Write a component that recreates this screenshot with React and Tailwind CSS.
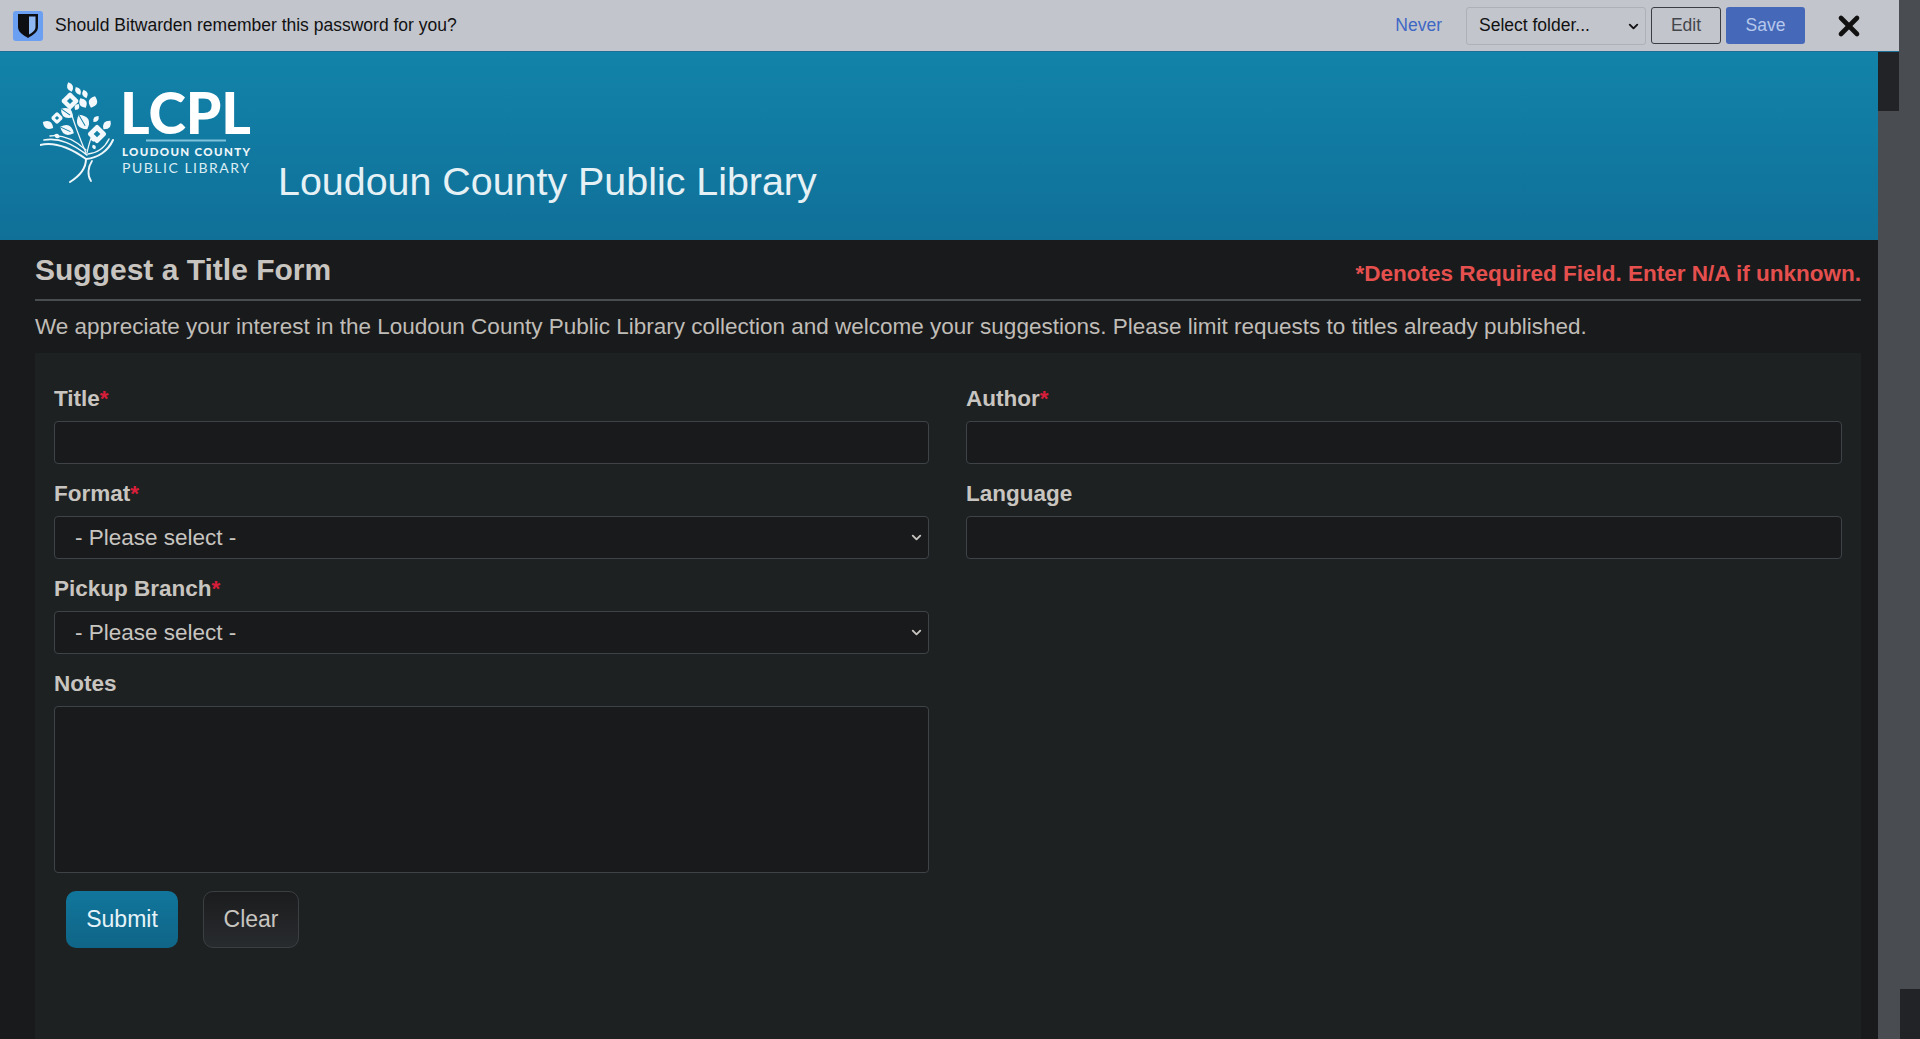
import React from 'react';
import { ChevronDown, X } from 'lucide-react';

const leaves = [
  [30, 4, 10, 5, 70], [38, 8, 9, 4.5, 60], [45, 11, 9, 4.5, 70], [53, 19, 12, 7, 110], [43, 20, 11, 6, 60],
  [27, 30, 15, 8, 35], [43, 39, 17, 10, 60], [27, 47, 15, 8, 25], [8, 42, 12, 6.5, 30], [67, 42, 11, 6, 130],
  [56, 36, 8, 4, 130], [17, 53, 6, 3.5, 30], [37, 24, 7, 4, 120], [53, 56, 6, 3.5, 70], [54, 64, 5, 3, 60],
];

const flowers = [[30, 18, 13], [17, 35, 9], [57, 51, 14]];

const LcplLogo = () => (
  <svg width="212" height="110" viewBox="0 -10 212 110" className="shrink-0">
    {leaves.map(([x, y, l, w, r], i) => (
      <g key={i} transform={`translate(${x} ${y}) rotate(${r})`}>
        <path d={`M${-l / 2} 0Q0 ${-w * 1.2} ${l / 2} 0Q0 ${w * 1.2} ${-l / 2} 0Z`} fill="#f2f8fb" />
        {l > 13 && <path d={`M${-l / 2} 0L${l / 4} 0`} stroke="#1280a6" strokeWidth="1" />}
      </g>
    ))}
    {flowers.map(([x, y, s], i) => (
      <g key={i} transform={`translate(${x} ${y}) rotate(45)`}>
        <rect x={-s / 2} y={-s / 2} width={s} height={s} rx="2" fill="#f2f8fb" />
        <rect x={-s / 6} y={-s / 6} width={s / 3} height={s / 3} fill="#1280a6" />
      </g>
    ))}
    <g fill="none" stroke="#eef6fa" strokeLinecap="round">
      <path d="M0 62C16 58 32 66 46 76" strokeWidth="2" />
      <path d="M4 57C20 54 34 62 47 72" strokeWidth="1.6" />
      <path d="M10 53C24 51 36 58 46 67" strokeWidth="1.4" />
      <path d="M46 76C58 75 68 68 73 57" strokeWidth="2" />
      <path d="M48 71C58 70 65 64 69 56" strokeWidth="1.4" />
      <path d="M46 76C46 86 38 94 30 99" strokeWidth="2" />
      <path d="M52 78C48 84 47 92 51 98" strokeWidth="1.8" />
      <path d="M30 26C34 40 40 56 46 70" strokeWidth="1.2" />
      <path d="M52 52C50 58 48 64 47 70" strokeWidth="1.2" />
    </g>
    <text x="80" y="51" fill="#fff" fontFamily="Lato, sans-serif" fontWeight="900" fontSize="57" textLength="131" lengthAdjust="spacingAndGlyphs">LCPL</text>
    <rect x="106" y="56.500" width="80" height="2" fill="#7fc0da" />
    <text x="82" y="73" fill="#eef6fa" fontFamily="Lato, sans-serif" fontWeight="900" fontSize="11.500" textLength="128" lengthAdjust="spacing">LOUDOUN COUNTY</text>
    <text x="82" y="90" fill="#dcedf4" fontFamily="Lato, sans-serif" fontWeight="400" fontSize="14" textLength="127" lengthAdjust="spacing">PUBLIC LIBRARY</text>
  </svg>
);

const NotificationBar = () => (
  <div className="h-[52px] shrink-0 flex items-center bg-[#c3c5cd] border-b border-[#1d6f97] text-[17.500px]">
    <div className="ml-[13px] w-[30px] h-[30px] rounded-[3px] bg-[#6a9ff2] flex items-center justify-center">
      <svg width="20" height="24" viewBox="0 0 20 24">
        <path d="M0 0h20v13c0 5-5 8-10 11C5 21 0 18 0 13z" fill="#0d0e11" />
        <path d="M11 2.500h6.500V13c0 3-3 5.500-6.500 7.500z" fill="#8fb8f2" />
      </svg>
    </div>
    <span className="ml-3 text-[#111]">Should Bitwarden remember this password for you?</span>
    <div className="ml-auto flex items-center">
      <span className="text-[#3e68c4] mr-6">Never</span>
      <div className="relative w-[180px] h-[38px] mr-[5px]">
        <select className="appearance-none w-full h-full pl-3 rounded-[3px] border border-[#adb0b8] bg-[#c3c5cd] text-[#111] outline-none">
          <option>Select folder...</option>
        </select>
        <ChevronDown size={15} strokeWidth={3} className="absolute right-[5px] top-[12px] text-[#111] pointer-events-none" />
      </div>
      <button className="w-[70px] h-[37px] mr-[5px] rounded-[3px] border border-[#3a3d42] text-[#43474c]">Edit</button>
      <button className="w-[79px] h-[37px] rounded-[3px] bg-[#4568b8] text-[#b6c8ec]">Save</button>
      <X size={32} strokeWidth={3.5} className="ml-[28px] mr-[34px] text-[#111]" />
    </div>
  </div>
);

const Req = () => <span className="text-[#d81e3a]">*</span>;

const Field = ({ label, required, children }) => (
  <div className="mb-[18px]">
    <div className="h-[24px] mb-[10px] flex items-center text-[22.500px] leading-none font-bold text-[#c8c5c0]">
      {label}
      {required && <Req />}
    </div>
    {children}
  </div>
);

const inputClass = 'block w-full h-[43px] rounded-[4px] border border-[#3f4347] bg-[#191a1c] outline-none';

const SelectField = () => (
  <div className="relative">
    <select className={`${inputClass} appearance-none pl-5 text-[22.500px] text-[#c8c5c0]`}>
      <option>- Please select -</option>
    </select>
    <ChevronDown size={15} strokeWidth={3} className="absolute right-[5px] top-[14px] text-[#c8c5c0] pointer-events-none" />
  </div>
);

const App = () => (
  <div className="w-[1920px] h-[1039px] flex overflow-hidden bg-[#191a1b] font-['Liberation_Sans',sans-serif]">
    <div className="w-[1899px] flex flex-col">
      <NotificationBar />
      <div className="flex-1 flex min-h-0">
        <div className="w-[1878px] flex flex-col">
          {/* Header */}
          <div className="h-[188px] shrink-0 flex pl-[40px] pt-[21px] bg-gradient-to-b from-[#1283aa] to-[#107098]">
            <LcplLogo />
            <h1 className="ml-[26px] mt-[86px] h-[44px] text-[39.400px] leading-[44px] text-[#e6f1f5]">Loudoun County Public Library</h1>
          </div>

          <div className="flex-1 min-h-0 pl-[35px]">
            <div className="w-[1826px]">
              <div className="h-[61px] flex items-end justify-between border-b-2 border-[#4a4d50] pb-[11px]">
                <h2 className="text-[30px] leading-[36px] font-bold text-[#c8c5c0]">Suggest a Title Form</h2>
                <span className="text-[22.500px] leading-[28px] font-bold text-[#e5504f]">*Denotes Required Field. Enter N/A if unknown.</span>
              </div>
              <p className="mt-[11px] text-[22.500px] leading-[30px] text-[#c0bdb8]">
                We appreciate your interest in the Loudoun County Public Library collection and welcome your suggestions. Please limit requests to titles already published.
              </p>
              {/* Form */}
              <div className="mt-[11px] h-[700px] bg-[#1e2121] pl-[19px] pr-[18px] pt-[34px]">
                <div className="grid grid-cols-[875px_876px] gap-x-[37px]">
                  <div>
                    <Field label="Title" required><input className={inputClass} /></Field>
                    <Field label="Format" required><SelectField /></Field>
                    <Field label="Pickup Branch" required><SelectField /></Field>
                    <Field label="Notes"><textarea className={`${inputClass} h-[167px] resize-none`} /></Field>
                  </div>
                  <div>
                    <Field label="Author" required><input className={inputClass} /></Field>
                    <Field label="Language"><input className={inputClass} /></Field>
                  </div>
                </div>
                <div className="flex pl-[12px] gap-[25px]">
                  <button className="w-[112px] h-[57px] rounded-[10px] bg-gradient-to-b from-[#11769c] to-[#0f6587] text-[23px] text-[#e6f3f8]">Submit</button>
                  <button className="w-[96px] h-[57px] rounded-[10px] border border-[#3c3f42] bg-gradient-to-b from-[#1b1c1e] to-[#282b2e] text-[23px] text-[#c8c5c0]">Clear</button>
                </div>
              </div>
            </div>
          </div>
        </div>
        {/* Inner scrollbar */}
        <div className="w-[21px] bg-[#494c50]">
          <div className="h-[59px] bg-[#212326]" />
        </div>
      </div>
    </div>
    {/* Outer scrollbar */}
    <div className="w-[21px] flex flex-col justify-end bg-[#494c50]">
      <div className="h-[50px] ml-px bg-[#212326]" />
    </div>
  </div>
);

export default App;
